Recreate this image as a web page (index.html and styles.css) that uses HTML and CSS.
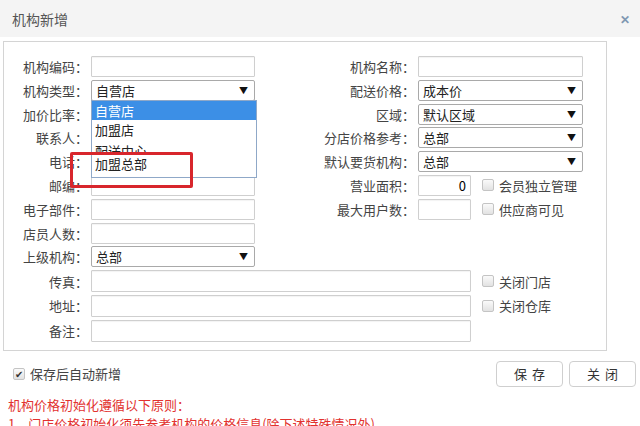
FILE: index.html
```html
<!DOCTYPE html>
<html lang="zh-CN">
<head>
  <meta charset="UTF-8" />
  <title>机构新增</title>
  <link rel="stylesheet" href="styles.css">
</head>
<body>
  <div class="dialog">
    <div class="dialog-head">
      <span class="dialog-title">机构新增</span>
      <span class="dialog-close">✕</span>
    </div>

    <div class="form-box">
      <div class="form-grid">
        <label class="lbl lbl-l">机构编码：</label>
        <div class="field"><input class="txt" type="text" /></div>
        <label class="lbl lbl-r">机构名称：</label>
        <div class="field span-r"><input class="txt" type="text" /></div>

        <label class="lbl lbl-l">机构类型：</label>
        <div class="field has-menu">
          <div class="sel sel-open"><span>自营店</span><i class="arrow">▼</i></div>
          <ul class="menu">
            <li class="active">自营店</li>
            <li>加盟店</li>
            <li class="cut">配送中心</li>
            <li class="last">加盟总部</li>
          </ul>
        </div>
        <label class="lbl lbl-r">配送价格：</label>
        <div class="field span-r"><div class="sel"><span>成本价</span><i class="arrow">▼</i></div></div>

        <label class="lbl lbl-l">加价比率：</label>
        <div class="field"><input class="txt" type="text" /></div>
        <label class="lbl lbl-r">区域：</label>
        <div class="field span-r"><div class="sel"><span>默认区域</span><i class="arrow">▼</i></div></div>

        <label class="lbl lbl-l">联系人：</label>
        <div class="field"><input class="txt" type="text" /></div>
        <label class="lbl lbl-r">分店价格参考：</label>
        <div class="field span-r"><div class="sel"><span>总部</span><i class="arrow">▼</i></div></div>

        <label class="lbl lbl-l">电话：</label>
        <div class="field"><input class="txt" type="text" /></div>
        <label class="lbl lbl-r">默认要货机构：</label>
        <div class="field span-r"><div class="sel"><span>总部</span><i class="arrow">▼</i></div></div>

        <label class="lbl lbl-l">邮编：</label>
        <div class="field"><input class="txt" type="text" /></div>
        <label class="lbl lbl-r">营业面积：</label>
        <div class="field"><input class="txt num" type="text" value="0" /></div>
        <div class="chk-cell"><span class="chk"></span>会员独立管理</div>

        <label class="lbl lbl-l">电子部件：</label>
        <div class="field"><input class="txt" type="text" /></div>
        <label class="lbl lbl-r">最大用户数：</label>
        <div class="field"><input class="txt" type="text" /></div>
        <div class="chk-cell"><span class="chk"></span>供应商可见</div>

        <label class="lbl lbl-l">店员人数：</label>
        <div class="field"><input class="txt" type="text" /></div>

        <label class="lbl lbl-l">上级机构：</label>
        <div class="field"><div class="sel sel-wide"><span>总部</span><i class="arrow">▼</i></div></div>

        <label class="lbl lbl-l">传真：</label>
        <div class="field span-wide"><input class="txt" type="text" /></div>
        <div class="chk-cell"><span class="chk"></span>关闭门店</div>

        <label class="lbl lbl-l">地址：</label>
        <div class="field span-wide"><input class="txt" type="text" /></div>
        <div class="chk-cell"><span class="chk"></span>关闭仓库</div>

        <label class="lbl lbl-l">备注：</label>
        <div class="field span-wide"><input class="txt" type="text" /></div>
      </div>

      <div class="mark"></div>
    </div>

    <div class="footer">
      <div class="auto-add"><span class="chk checked">✔</span>保存后自动新增</div>
      <div class="buttons">
        <button class="btn">保存</button>
        <button class="btn">关闭</button>
      </div>
    </div>

    <div class="notes">
      <p>机构价格初始化遵循以下原则：</p>
      <p>1、门店价格初始化须先参考机构的价格信息(除下述特殊情况外)</p>
    </div>
  </div>
</body>
</html>
```

FILE: styles.css
```css
html, body {
  margin: 0;
  padding: 0;
  width: 640px;
  height: 426px;
  overflow: hidden;
  background: #fff;
  font-family: "Noto Sans CJK SC", "Noto Sans", sans-serif;
  color: #333;
  font-size: 13px;
}
.dialog { width: 640px; }

.dialog-head {
  height: 37px;
  background: #f4f4f4;
  display: flex;
  align-items: center;
  justify-content: space-between;
  padding: 0 10px 0 12px;
}
.dialog-title { font-size: 14px; color: #555; }
.dialog-close { font-size: 12px; font-weight: bold; color: #7f98b2; }

.form-box {
  position: relative;
  margin: 4px 0 0 3px;
  width: 602px;
  border: 1px solid #d4d4d4;
  padding: 14px 0 8px 0;
}
.form-grid {
  display: grid;
  grid-template-columns: 84px 164px 157px 53px 109px;
  grid-template-rows: repeat(9, 21px) repeat(3, 22px);
  column-gap: 3px;
  row-gap: 2.8px;
}
.lbl {
  display: flex;
  align-items: center;
  justify-content: flex-end;
  white-space: nowrap;
  color: #444;
  font-size: 13px;
}
.lbl-l { grid-column: 1; }
.lbl-r { grid-column: 3; }
.field { position: relative; display: flex; }
.span-r { grid-column: 4 / 6; }
.span-wide { grid-column: 2 / 5; }

.txt {
  box-sizing: border-box;
  width: 100%;
  height: 100%;
  margin: 0;
  border: 1px solid #cfcfcf;
  border-radius: 1px;
  box-shadow: inset 0 1px 1px rgba(0, 0, 0, 0.05);
  padding: 0 4px;
  font: inherit;
  font-size: 13px;
  background: #fff;
}
.num { text-align: right; }

.sel {
  box-sizing: border-box;
  width: 100%;
  height: 100%;
  border: 1px solid #a9a9a9;
  border-radius: 2px;
  background: #fff;
  display: flex;
  align-items: center;
  justify-content: space-between;
  padding: 0 6px 0 4px;
  font-size: 13px;
  color: #222;
}
.sel-open, .sel-wide { width: calc(100% + 2px); }
.arrow { font-style: normal; font-size: 9px; color: #111; }

.menu {
  position: absolute;
  top: 100%;
  left: 0;
  width: 166px;
  box-sizing: border-box;
  margin: -1px 0 0 0;
  padding: 0;
  list-style: none;
  background: #fff;
  border: 1px solid #8fa8c8;
  z-index: 2;
  font-size: 13px;
}
.menu li {
  height: 19px;
  line-height: 19px;
  padding-left: 3px;
  color: #222;
}
.menu li.active { background: #3c8fe6; color: #fff; }
.menu li.cut { height: 13px; overflow: hidden; line-height: 23px; }
.menu li.last { height: 25px; line-height: 24px; }

.chk-cell {
  display: flex;
  align-items: center;
  padding-left: 8px;
  color: #444;
  white-space: nowrap;
  font-size: 13px;
}
.chk {
  box-sizing: border-box;
  width: 12px;
  height: 12px;
  margin-right: 5px;
  border: 1px solid #c4c4c4;
  border-radius: 2px;
  background: linear-gradient(#fafafa, #e2e2e2);
}
.chk.checked {
  display: flex;
  align-items: center;
  justify-content: center;
  font-size: 10px;
  color: #333;
  line-height: 1;
}

.mark {
  position: absolute;
  left: 66px;
  top: 110px;
  width: 123px;
  height: 36px;
  box-sizing: border-box;
  border: 3px solid #d8262c;
  border-radius: 2px;
  z-index: 3;
}

.footer {
  display: flex;
  align-items: center;
  justify-content: space-between;
  margin-top: 10px;
  padding: 0 4px 0 13px;
}
.auto-add { display: flex; align-items: center; font-size: 13px; color: #444; }
.buttons { display: flex; gap: 6px; }
.btn {
  width: 67px;
  height: 26px;
  background: #fff;
  border: 1px solid #cfcfcf;
  border-radius: 4px;
  font-family: inherit;
  font-size: 13px;
  letter-spacing: 5px;
  padding: 0 0 0 5px;
  color: #333;
}

.notes { margin-top: 10px; padding-left: 8px; color: #e2322f; }
.notes p { margin: 0 0 3px 0; font-size: 13px; line-height: 16px; }
```
